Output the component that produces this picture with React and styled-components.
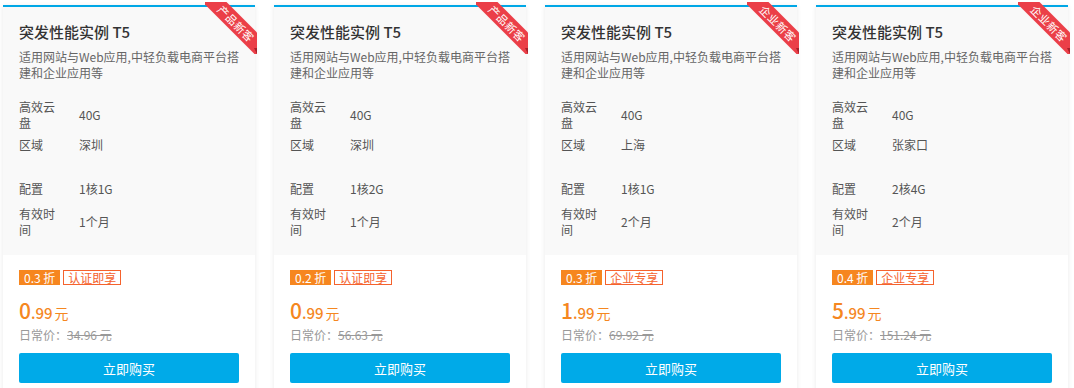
import React from "react";
import styled, { createGlobalStyle } from "styled-components";

const Global = createGlobalStyle`
  html, body { margin: 0; padding: 0; background: #fff; }
  body { font-family: "Noto Sans CJK SC", "Noto Sans", sans-serif; }
  * { box-sizing: border-box; }
`;

const Page = styled.div`
  display: flex;
  gap: 19px;
  padding: 5px 6px 0 3px;
  align-items: flex-start;
`;

const Card = styled.div`
  position: relative;
  width: 252px;
  flex: none;
  border-top: 2px solid #00a7e6;
  background: #fff;
  box-shadow: 0 1px 5px rgba(0, 0, 0, 0.09);
`;

const Upper = styled.div`
  background: #f9f9f9;
  padding: 15px 16px 14px;
`;

const Title = styled.div`
  font-size: 15px;
  line-height: 20px;
  font-weight: 500;
  color: #333;
`;

const Desc = styled.div`
  margin-top: 7px;
  font-size: 12px;
  line-height: 16px;
  color: #666;
`;

const Specs = styled.div`
  margin-top: 15px;
  display: flex;
  flex-direction: column;
`;

const Row = styled.div`
  display: flex;
  align-items: center;
  padding: 3px 0;
  margin-top: ${(p) => p.$extra || 0}px;
  min-height: 22px;
  font-size: 12px;
  line-height: 16px;
  color: #555;
`;

const Label = styled.div`
  width: 44px;
  margin-right: 16px;
  flex: none;
`;

const Value = styled.div`
  color: #555;
`;

const Lower = styled.div`
  background: #fff;
  padding: 15px 16px 20px;
`;

const Tags = styled.div`
  display: flex;
  gap: 3px;
`;

const Tag = styled.span`
  display: inline-block;
  font-size: 12px;
  line-height: 13px;
  height: 15px;
  padding: 0 4px;
  border: 1px solid ${(p) => (p.$filled ? "#f6861f" : "#f5622d")};
  background: ${(p) => (p.$filled ? "#f6861f" : "#fff")};
  color: ${(p) => (p.$filled ? "#fff" : "#f5622d")};
`;

const Price = styled.div`
  margin-top: 13px;
  line-height: 24px;
  height: 24px;
  color: #f5871f;
  font-size: 14px;
`;

const Big = styled.span`
  font-size: 21px;
  font-weight: 500;
`;

const Small = styled.span`
  font-size: 15px;
  font-weight: 500;
`;

const Unit = styled.span`
  font-size: 14px;
  margin-left: 2px;
`;

const Orig = styled.div`
  margin-top: 5px;
  font-size: 12px;
  line-height: 16px;
  color: #999;
`;

const Strike = styled.span`
  text-decoration: line-through;
`;

const Button = styled.button`
  display: block;
  margin-top: 10px;
  width: 100%;
  height: 30px;
  border: none;
  border-radius: 2px;
  background: #00aae8;
  color: #fff;
  font-family: inherit;
  font-size: 13px;
  cursor: pointer;
`;

const RibbonBox = styled.div`
  position: absolute;
  top: -5px;
  right: -2px;
  width: 52px;
  height: 52px;
  overflow: hidden;
  pointer-events: none;
`;

const RibbonBand = styled.div`
  position: absolute;
  left: -9px;
  top: 12.5px;
  width: 80px;
  height: 17px;
  background: #eb3f48;
  color: #fff;
  font-size: 11px;
  line-height: 17px;
  text-align: center;
  transform: rotate(45deg);
  letter-spacing: 0.5px;
`;

const Fold = styled.div`
  position: absolute;
  right: 0;
  bottom: 0;
  width: 0;
  height: 0;
  border-left: 3px solid transparent;
  border-top: 6px solid #a8202a;
`;

const Ribbon = ({ text }) => (
  <RibbonBox>
    <RibbonBand>{text}</RibbonBand>
    <Fold />
  </RibbonBox>
);

const data = [
  { off: "0.3 折", tag: "认证即享", int: "0", dec: ".99", orig: "34.96 元", region: "深圳", cfg: "1核1G", time: "1个月", ribbon: "产品新客" },
  { off: "0.2 折", tag: "认证即享", int: "0", dec: ".99", orig: "56.63 元", region: "深圳", cfg: "1核2G", time: "1个月", ribbon: "产品新客" },
  { off: "0.3 折", tag: "企业专享", int: "1", dec: ".99", orig: "69.92 元", region: "上海", cfg: "1核1G", time: "2个月", ribbon: "企业新客" },
  { off: "0.4 折", tag: "企业专享", int: "5", dec: ".99", orig: "151.24 元", region: "张家口", cfg: "2核4G", time: "2个月", ribbon: "企业新客" },
];

export default function App() {
  return (
    <>
      <Global />
      <Page>
        {data.map((d, i) => (
          <Card key={i}>
            <Ribbon text={d.ribbon} />
            <Upper>
              <Title>突发性能实例 T5</Title>
              <Desc>适用网站与Web应用,中轻负载电商平台搭建和企业应用等</Desc>
              <Specs>
                <Row>
                  <Label>高效云盘</Label>
                  <Value>40G</Value>
                </Row>
                <Row>
                  <Label>区域</Label>
                  <Value>{d.region}</Value>
                </Row>
                <Row />
                <Row>
                  <Label>配置</Label>
                  <Value>{d.cfg}</Value>
                </Row>
                <Row $extra={3}>
                  <Label>有效时间</Label>
                  <Value>{d.time}</Value>
                </Row>
              </Specs>
            </Upper>
            <Lower>
              <Tags>
                <Tag $filled>{d.off}</Tag>
                <Tag>{d.tag}</Tag>
              </Tags>
              <Price>
                <Big>{d.int}</Big>
                <Small>{d.dec}</Small>
                <Unit>元</Unit>
              </Price>
              <Orig>
                日常价：<Strike>{d.orig}</Strike>
              </Orig>
              <Button>立即购买</Button>
            </Lower>
          </Card>
        ))}
      </Page>
    </>
  );
}
